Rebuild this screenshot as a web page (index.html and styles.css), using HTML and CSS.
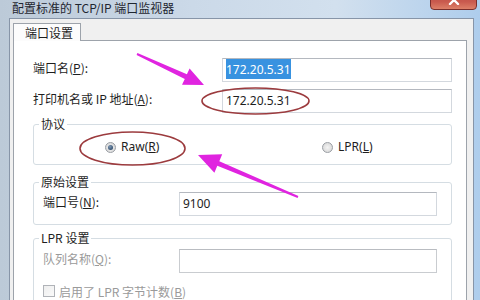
FILE: index.html
```html
<!DOCTYPE html>
<html lang="zh-CN">
<head>
<meta charset="utf-8">
<title>配置标准的 TCP/IP 端口监视器</title>
<link rel="stylesheet" href="styles.css">
</head>
<body>
<div class="window">
  <div class="titlebar">
    <span class="title">配置标准的 TCP/IP 端口监视器</span>
    <div class="close">
      <svg width="12" height="10" viewBox="0 0 12 10"><path d="M2 1 L10 9 M10 1 L2 9" stroke="#fff" stroke-width="2.4" stroke-linecap="round"/></svg>
    </div>
  </div>
  <div class="frame">
    <div class="tabs"><div class="tab">端口设置</div></div>
    <div class="panel">
      <div class="row">
        <span class="label">端口名(<u>P</u>):</span>
        <div class="input wide"><span class="sel">172.20.5.31</span></div>
      </div>
      <div class="row gap">
        <span class="label">打印机名或 IP 地址(<u>A</u>):</span>
        <div class="input wide">172.20.5.31</div>
      </div>
      <fieldset class="group proto">
        <legend>协议</legend>
        <div class="radios">
          <span class="radio"><span class="dot on"></span><span class="rtext">Raw(<u>R</u>)</span></span>
          <span class="radio"><span class="dot"></span><span class="rtext">LPR(<u>L</u>)</span></span>
        </div>
      </fieldset>
      <fieldset class="group raw">
        <legend>原始设置</legend>
        <div class="gbody">
          <div class="row">
            <span class="label">端口号(<u>N</u>):</span>
            <div class="input narrow">9100</div>
          </div>
        </div>
      </fieldset>
      <fieldset class="group lpr">
        <legend>LPR 设置</legend>
        <div class="gbody lprbody">
          <div class="row">
            <span class="label dis">队列名称(<u>Q</u>):</span>
            <div class="input narrow disabled"></div>
          </div>
          <div class="check"><span class="box"></span><span class="dis">启用了 LPR 字节计数(<u>B</u>)</span></div>
        </div>
      </fieldset>
    </div>
  </div>
  <svg class="annot" width="480" height="300" viewBox="0 0 480 300">
    <ellipse cx="255.5" cy="101" rx="53.5" ry="13" fill="none" stroke="#9c3b3e" stroke-width="1.6"/>
    <ellipse cx="132.5" cy="148.5" rx="52.5" ry="16.5" fill="none" stroke="#9c3b3e" stroke-width="1.6"/>
    <polygon fill="#e024e0" points="137.4,53.1 186.9,74.3 189.6,68.4 204,85 182,84.8 184.8,78.9 136.6,54.9"/>
    <polygon fill="#e024e0" points="298.4,196.1 219.3,161.2 222.2,154.3 198,155 214.4,172.7 217.3,165.8 297.6,197.9"/>
  </svg>
</div>
</body>
</html>
```

FILE: styles.css
```css
html, body {
  margin: 0;
  padding: 0;
}
body {
  width: 480px;
  height: 300px;
  overflow: hidden;
  font-family: "Noto Sans CJK SC", "Noto Sans", sans-serif;
  font-size: 12px;
  color: #1e1e1e;
}
.window {
  position: relative;
  width: 480px;
  height: 300px;
  overflow: hidden;
  background: linear-gradient(90deg, #bccad8 0%, #cbd9e8 40%, #d2e0ee 70%, #aecdec 100%);
}
.titlebar {
  display: flex;
  align-items: flex-start;
  height: 18px;
}
.title {
  margin: 0 0 0 12px;
  line-height: 16px;
  color: #1f2630;
}
.close {
  margin-left: auto;
  margin-right: 3px;
  margin-top: -10px;
  width: 47px;
  height: 20px;
  box-sizing: border-box;
  border: 1px solid #7a2f2c;
  border-radius: 0 0 4px 4px;
  background: linear-gradient(180deg, #b84a44 0%, #c95a4e 60%, #dd8068 100%);
  display: flex;
  align-items: center;
  justify-content: center;
}
.close svg {
  display: block;
}
.frame {
  box-sizing: border-box;
  margin-left: 9px;
  width: 465px;
  height: 300px;
  border: 1px solid #8795a8;
  background: #f0f0f0;
  padding: 4px 6px 0 3px;
}
.tabs {
  display: flex;
  height: 17px;
}
.tab {
  position: relative;
  z-index: 1;
  box-sizing: border-box;
  height: 18px;
  width: 68px;
  border: 1px solid #9da3ab;
  border-bottom: none;
  background: #fcfcfc;
  padding-left: 11px;
  line-height: 17px;
}
.panel {
  box-sizing: border-box;
  height: 300px;
  border: 1px solid #9da3ab;
  background: #ffffff;
  padding: 17px 14px 0 19px;
}
.row {
  display: flex;
  align-items: center;
  height: 24px;
}
.row.gap {
  margin-top: 7px;
}
.label {
  margin-bottom: 5px;
  white-space: nowrap;
}
.input {
  box-sizing: border-box;
  margin-left: auto;
  height: 24px;
  border: 1px solid #d3d8de;
  border-top-color: #b4b8bf;
  background: #fff;
  padding-left: 3px;
  line-height: 21px;
  font-family: "Noto Sans", "Noto Sans CJK SC", sans-serif;
  font-size: 12px;
}
.input.wide {
  width: 230px;
}
.input.narrow {
  width: 258px;
}
.input.disabled {
  border-color: #c9ccd0;
  border-top-color: #b9bcc1;
}
.sel {
  background: #3892e0;
  color: #fff;
  padding: 2px 0 1px;
}
.group {
  margin: 0;
  padding: 0;
  border: 1px solid #d5dde3;
  border-radius: 3px;
  min-width: 0;
}
.group legend {
  margin-left: 5px;
  padding: 0 2px;
  line-height: 16px;
}
.proto {
  margin-top: 3px;
  padding: 7px 0 9px;
}
.radios {
  display: grid;
  grid-template-columns: 217px auto;
  padding-left: 71px;
  height: 16px;
  align-items: center;
}
.radio {
  display: inline-flex;
  align-items: center;
  gap: 5px;
  line-height: 16px;
}
.rtext {
  font-family: "Noto Sans", "Noto Sans CJK SC", sans-serif;
  white-space: nowrap;
}
.dot {
  box-sizing: border-box;
  width: 11px;
  height: 11px;
  border-radius: 50%;
  border: 1px solid #9a9ea4;
  background: radial-gradient(circle at 50% 50%, #f4f4f4 0%, #dcdcdc 70%, #cfd0d2 100%);
  display: flex;
  align-items: center;
  justify-content: center;
}
.dot.on::after {
  content: "";
  width: 5px;
  height: 5px;
  border-radius: 50%;
  background: radial-gradient(circle at 40% 35%, #7e97b3 0%, #2d4a6a 80%);
}
.raw {
  margin-top: 9px;
}
.gbody {
  padding: 2px 14px 8px 9px;
}
.lpr {
  margin-top: 5px;
}
.lprbody {
  padding-top: 3px;
}
.dis {
  color: #9a9a9a;
}
.check {
  display: flex;
  align-items: center;
  gap: 4px;
  margin-top: 10px;
  height: 16px;
  white-space: nowrap;
}
.box {
  box-sizing: border-box;
  width: 12px;
  height: 12px;
  border: 1px solid #b0b3b8;
  background: linear-gradient(135deg, #eeeeee, #fafafa);
}
.annot {
  position: absolute;
  left: 0;
  top: 0;
  pointer-events: none;
}
```
